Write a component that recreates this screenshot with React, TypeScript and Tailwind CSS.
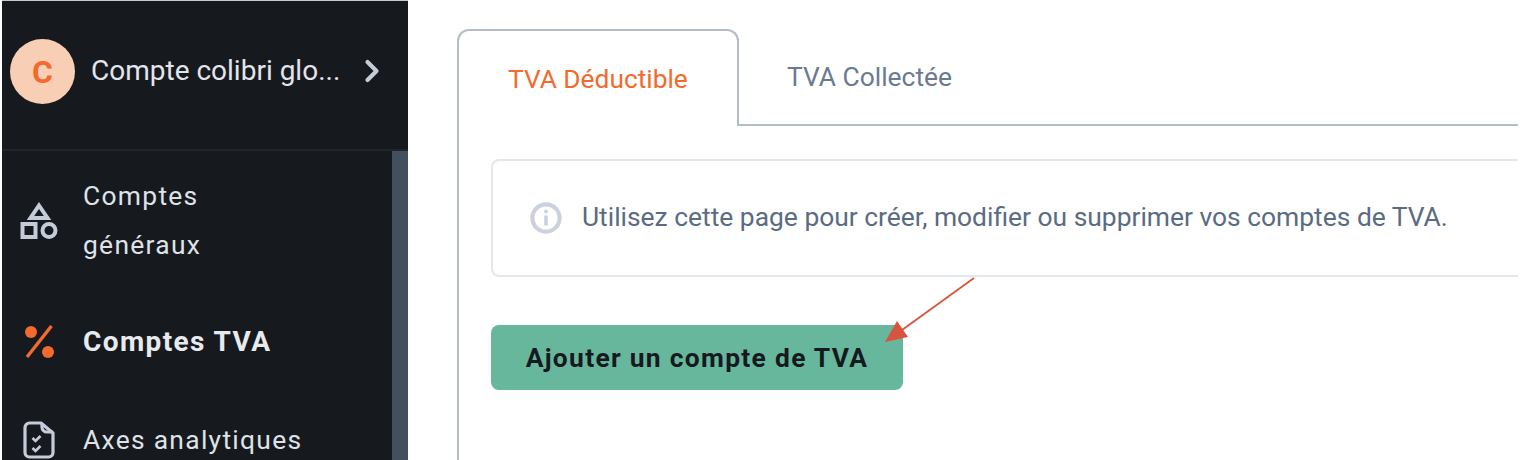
import { ChevronRight } from 'lucide-react';

function ShapesIcon() {
  return (
    <svg width="38" height="38" viewBox="0 0 38 38" fill="none" stroke="#c5ccd9" strokeWidth="4">
      <path d="M19 3.5 L27.5 16 H10.5 Z" />
      <rect x="2.5" y="22" width="13" height="13" />
      <circle cx="29" cy="28.5" r="6.5" />
    </svg>
  );
}

function PercentIcon() {
  return (
    <svg width="32" height="34" viewBox="0 0 32 34" fill="none">
      <circle cx="7" cy="7" r="6" fill="#f26a2e" />
      <circle cx="24" cy="27" r="6" fill="#f26a2e" />
      <path d="M27.5 1 L3 32" stroke="#f26a2e" strokeWidth="3.4" />
    </svg>
  );
}

function TaskIcon() {
  return (
    <svg className="mb-[3px]" width="32" height="38" viewBox="0 0 32 38" fill="none" stroke="#c5ccd9" strokeWidth="3.2">
      <path d="M18 2H6.5A4.5 4.5 0 0 0 2 6.5v25A4.5 4.5 0 0 0 6.5 36h19a4.5 4.5 0 0 0 4.5-4.5V12z" strokeLinejoin="round" />
      <path d="M19 2v4a5 5 0 0 0 5 5h6" />
      <path d="M9.5 17l3 3 5-5M9.5 27l3 3 5-5" strokeWidth="2.6" />
    </svg>
  );
}

function InfoIcon() {
  return (
    <svg width="32" height="32" viewBox="0 0 32 32" fill="none">
      <circle cx="16" cy="16" r="13.6" stroke="#cbd2dd" strokeWidth="4.2" />
      <circle cx="16" cy="9.5" r="2" fill="#cbd2dd" />
      <rect x="14.2" y="13.5" width="3.6" height="10" fill="#cbd2dd" />
    </svg>
  );
}

function Arrow() {
  return (
    <svg className="absolute left-[880px] top-[274px] pointer-events-none" width="100" height="72" viewBox="0 0 100 72" fill="none">
      <path d="M94 4 L22 56" stroke="#d9533f" strokeWidth="1.8" />
      <path d="M5 68 L17 47 L28 63 Z" fill="#d9533f" />
    </svg>
  );
}

export default function App() {
  return (
    <div className="relative w-[1536px] h-[460px] overflow-hidden bg-white font-['Roboto',sans-serif] flex pl-[2px]">
      <aside className="w-[406px] h-full shrink-0 flex flex-col bg-[#16191e] border-t border-[#c9c9c9]">
        <div className="h-[150px] shrink-0 flex items-start border-b-2 border-[#1f2630] pl-[8px] pt-[38px]">
          <span className="w-[65px] h-[65px] rounded-full bg-[#f8cfb4] text-[#f26a2e] text-[32px] font-bold flex items-center justify-center">
            C
          </span>
          <span className="ml-[16px] mt-[13px] text-[28px] leading-[38px] text-[#e2e5ea]">Compte colibri glo...</span>
          <ChevronRight className="ml-[14px] mt-[14px] text-[#c5ccd9]" size={36} strokeWidth={2.8} />
        </div>
        <div className="flex-1 flex min-h-0">
          <nav className="flex-1 min-w-0 overflow-hidden text-[26.4px] tracking-[1.3px] text-[#dfe2e7]">
            <div className="flex items-center pl-[18px] h-[134px] pt-[5px]">
              <ShapesIcon />
              <span className="ml-[25px] leading-[49px]">
                Comptes
                <br />
                généraux
              </span>
            </div>
            <div className="flex items-center pl-[22px] h-[76px] mt-[19px]">
              <PercentIcon />
              <span className="ml-[27px] font-bold text-[28px] tracking-[1.4px] text-[#e8eaee]">Comptes TVA</span>
            </div>
            <div className="flex items-center pl-[21px] mt-[39px] h-[44px]">
              <TaskIcon />
              <span className="ml-[28px]">Axes analytiques</span>
            </div>
          </nav>
          <div className="w-[16px] bg-[#444f5e] shrink-0" />
        </div>
      </aside>
      <main className="w-[1110px] shrink-0 h-full overflow-hidden pl-[49px] pt-[29px]">
        <div className="flex h-[97px]">
          <div className="w-[282px] shrink-0 border-2 border-b-0 border-[#b4bccb] rounded-t-[12px] pl-[49px] pt-[30px] text-[26.3px] leading-[36px] text-[#f26a2e] bg-white">
            TVA Déductible
          </div>
          <div className="flex-1 border-b-2 border-[#b4bccb] pl-[48px] pt-[30px] text-[26.4px] leading-[36px] text-[#6b7a90]">
            TVA Collectée
          </div>
        </div>
        <div className="border-l-2 border-[#b4bccb] h-[340px] pl-[32px] pt-[33px]">
          <div className="h-[118px] border-2 border-r-0 border-[#e4e7ec] rounded-l-[8px] flex items-center pl-[37px]">
            <InfoIcon />
            <span className="ml-[20px] text-[26.4px] text-[#5a6b82]">Utilisez cette page pour créer, modifier ou supprimer vos comptes de TVA.</span>
          </div>
          <button className="mt-[48px] w-[412px] h-[65px] pt-[2px] rounded-[8px] bg-[#67b79d] text-[26.4px] font-bold tracking-[1.3px] text-[#16191e] flex items-center justify-center">
            Ajouter un compte de TVA
          </button>
        </div>
      </main>
      <Arrow />
    </div>
  );
}
